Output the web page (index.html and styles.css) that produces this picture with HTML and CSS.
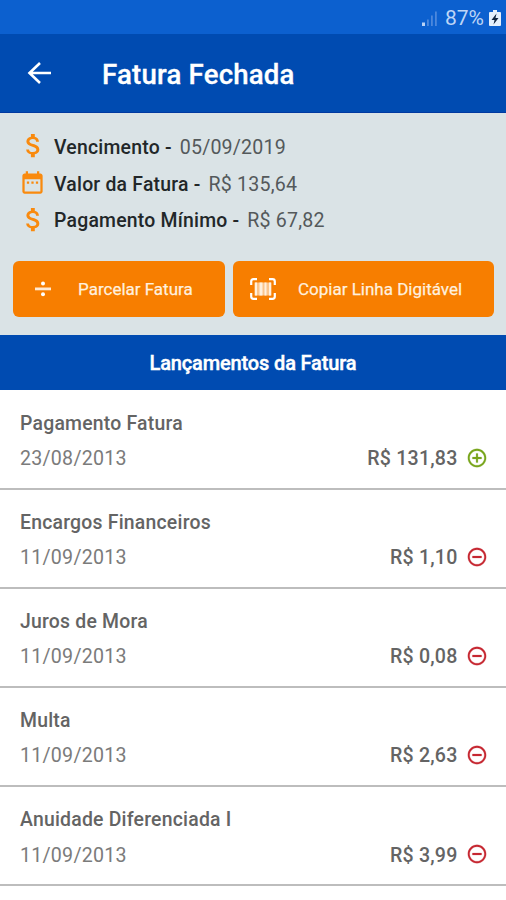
FILE: index.html
```html
<!DOCTYPE html>
<html lang="pt-BR">
<head>
<meta charset="utf-8">
<title>Fatura Fechada</title>
<link rel="stylesheet" href="styles.css">
</head>
<body>
<svg class="defs" width="0" height="0">
  <symbol id="dollar" viewBox="0 0 24 24"><path d="M11.8 10.9c-2.27-.59-3-1.2-3-2.15 0-1.09 1.01-1.85 2.7-1.85 1.78 0 2.44.85 2.5 2.1h2.21c-.07-1.72-1.12-3.3-3.21-3.81V3h-3v2.16c-1.94.42-3.5 1.68-3.5 3.61 0 2.31 1.91 3.46 4.7 4.13 2.5.6 3 1.48 3 2.41 0 .69-.49 1.79-2.7 1.79-2.06 0-2.87-.92-2.98-2.1h-2.2c.12 2.19 1.76 3.42 3.68 3.83V21h3v-2.15c1.95-.37 3.5-1.5 3.5-3.55 0-2.84-2.43-3.81-4.7-4.4z"/></symbol>
  <symbol id="calendar" viewBox="0 0 24 24"><path d="M9 11H7v2h2v-2zm4 0h-2v2h2v-2zm4 0h-2v2h2v-2zm2-7h-1V2h-2v2H8V2H6v2H5c-1.110 0-1.990.9-1.990 2L3 20c0 1.100.89 2 2 2h14c1.100 0 2-.9 2-2V6c0-1.100-.9-2-2-2zm0 16H5V9h14v11z"/></symbol>
  <symbol id="plus" viewBox="0 0 24 24"><path d="M13 7h-2v4H7v2h4v4h2v-4h4v-2h-4V7zm-1-5C6.480 2 2 6.480 2 12s4.480 10 10 10 10-4.480 10-10S17.520 2 12 2zm0 18c-4.410 0-8-3.590-8-8s3.590-8 8-8 8 3.590 8 8-3.590 8-8 8z"/></symbol>
  <symbol id="minus" viewBox="0 0 24 24"><path d="M7 11v2h10v-2H7zm5-9C6.480 2 2 6.480 2 12s4.480 10 10 10 10-4.480 10-10S17.520 2 12 2zm0 18c-4.410 0-8-3.590-8-8s3.590-8 8-8 8 3.590 8 8-3.590 8-8 8z"/></symbol>
</svg>
<div class="status">
  <svg class="signal" viewBox="0 0 17 17" width="17" height="17"><path d="M1 12.500h3v3.500H1z" fill="#b9d2f5"/><path d="M6 9.500h1.800v6.500H6zM10 5.500h1.800v10.500H10zM14 1.500h1.800v14.500H14z" fill="#4c88dc"/></svg>
  <span class="percent">87%</span>
  <svg class="battery" viewBox="0 0 12 18" width="12" height="18"><path d="M4 1h4v2h3q1 0 1 1v12q0 1-1 1H1q-1 0-1-1V4q0-1 1-1h3z" fill="#e4effc"/><path d="M7.500 4.500L2.500 11h3l-1 4.500 5-6.500h-3z" fill="#10243f"/></svg>
</div>
<header class="appbar">
  <svg class="back" viewBox="0 0 24 24" width="24" height="24"><path d="M24 12H2M13 2L2.500 12l10.500 10" fill="none" stroke="#fff" stroke-width="2.600"/></svg>
  <h1 class="title">Fatura Fechada</h1>
</header>
<section class="summary">
  <div class="info"><svg class="info-icon money"><use href="#dollar"/></svg><b class="label">Vencimento -</b><span class="value">05/09/2019</span></div>
  <div class="info"><svg class="info-icon"><use href="#calendar"/></svg><b class="label">Valor da Fatura -</b><span class="value">R$ 135,64</span></div>
  <div class="info"><svg class="info-icon money"><use href="#dollar"/></svg><b class="label">Pagamento Mínimo -</b><span class="value">R$ 67,82</span></div>
  <div class="actions">
    <button class="btn split"><svg class="divide" viewBox="0 0 16 16" width="16" height="16"><path d="M0 6.500h16v2.800H0z" fill="#ffe9d2"/><circle cx="8" cy="2.500" r="2" fill="#fff"/><circle cx="8" cy="13.200" r="2" fill="#fff"/></svg><span>Parcelar Fatura</span></button>
    <button class="btn copy"><svg class="barcode" viewBox="0 0 26 22" width="26" height="22"><path d="M7 1.200H3.500Q1.200 1.200 1.200 3.500V7M19 1.200h3.500q2.300 0 2.300 2.300V7M1.200 15v3.500q0 2.300 2.300 2.300H7M24.800 15v3.500q0 2.300-2.300 2.300H19" fill="none" stroke="#fff" stroke-width="2.200"/><path d="M4.500 4.500h17v13h-17z" fill="#fbc58d"/><path d="M5 4.500h2v13H5zM9.500 4.500h3v13h-3zM14.500 4.500h2v13h-2zM19 4.500h2v13h-2z" fill="#fff1df"/></svg><span>Copiar Linha Digitável</span></button>
  </div>
</section>
<h2 class="band">Lançamentos da Fatura</h2>
<main class="list">
  <article class="row"><div class="name">Pagamento Fatura</div><div class="line"><span class="date">23/08/2013</span><b class="amount">R$ 131,83</b><svg class="mark credit"><use href="#plus"/></svg></div></article>
  <article class="row"><div class="name">Encargos Financeiros</div><div class="line"><span class="date">11/09/2013</span><b class="amount">R$ 1,10</b><svg class="mark"><use href="#minus"/></svg></div></article>
  <article class="row"><div class="name">Juros de Mora</div><div class="line"><span class="date">11/09/2013</span><b class="amount">R$ 0,08</b><svg class="mark"><use href="#minus"/></svg></div></article>
  <article class="row"><div class="name">Multa</div><div class="line"><span class="date">11/09/2013</span><b class="amount">R$ 2,63</b><svg class="mark"><use href="#minus"/></svg></div></article>
  <article class="row"><div class="name">Anuidade Diferenciada I</div><div class="line"><span class="date">11/09/2013</span><b class="amount">R$ 3,99</b><svg class="mark"><use href="#minus"/></svg></div></article>
</main>
</body>
</html>
```
FILE: styles.css
```css
* { box-sizing: border-box; }
body { margin: 0; height: 900px; overflow: hidden; background: #fff; font-family: Roboto, sans-serif; color: #646464; }
.defs { display: none; }
svg { flex: none; }
.status { height: 34px; background: #0c60cf; display: flex; align-items: center; justify-content: flex-end; padding: 2px 5px 0 0; color: #bdd5f6; }
.percent { font-size: 21px; line-height: 30px; margin: 0 5px 0 7px; }
.appbar { height: 79px; background: #004bb1; border-bottom: 1px solid #0039a0; display: flex; align-items: center; padding-left: 27px; }
.title { margin: 4px 0 0 51px; font-size: 27.600px; line-height: 32px; font-weight: 500; color: #fff; letter-spacing: .2px; -webkit-text-stroke: .3px #fff; }
.summary { height: 222px; background: #dae3e6; padding-top: 15px; }
.info { height: 36.700px; display: flex; align-items: center; padding-left: 19px; font-size: 19.400px; line-height: 24px; color: #54595b; white-space: nowrap; }
.info-icon { width: 27px; height: 27px; fill: #f98a0e; margin: -1px 8px 0 0; }
.money { width: 31px; height: 31px; margin: -1px 5px 0 -1px; }
.label { font-weight: 500; color: #222729; margin: 3px 8px 0 0; letter-spacing: .22px; }
.value { font-size: 19.600px; margin-top: 3px; letter-spacing: .2px; }
.actions { display: flex; gap: 8px; padding: 23px 12px 0 13px; }
.btn { height: 56px; border: 0; border-radius: 6px; background: #f77e00; color: #fff0df; font: 400 17px/22px Roboto, sans-serif; -webkit-text-stroke: .25px #fff0df; display: flex; align-items: center; padding: 0; white-space: nowrap; }
.split { width: 212px; padding-left: 22px; }
.divide { margin-right: 27px; }
.copy { width: 261px; padding-left: 17px; }
.barcode { margin-right: 22px; }
.band { margin: 0; height: 55px; background: #004bb1; color: #fff; font-size: 20px; line-height: 57px; font-weight: 500; letter-spacing: -.15px; -webkit-text-stroke: .4px #fff; text-align: center; }
.row { height: 99.200px; border-bottom: 2px solid #bdbdbd; padding: 20px 19px 0 20px; }
.row:first-child { height: 99.600px; padding-top: 20.500px; }
.name { font-size: 19.400px; line-height: 26px; font-weight: 500; letter-spacing: .22px; }
.line { display: flex; align-items: center; height: 26px; margin-top: 9px; font-size: 19.600px; }
.date { color: #7b7b7b; letter-spacing: .25px; }
.amount { margin-left: auto; font-weight: 500; letter-spacing: .2px; }
.mark { width: 22px; height: 22px; fill: #c62832; stroke: #c62832; stroke-width: .25px; margin: -2px -.5px 0 8px; }
.credit { fill: #78a51c; stroke: #78a51c; }
```
